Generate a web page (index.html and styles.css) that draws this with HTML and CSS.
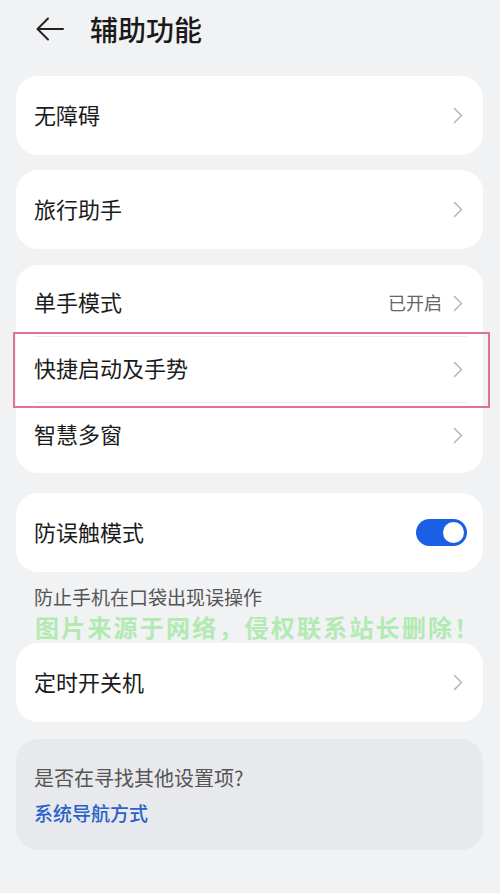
FILE: index.html
```html
<!DOCTYPE html>
<html lang="zh-CN">
<head>
    <meta charset="UTF-8">
    <meta name="viewport" content="width=device-width, initial-scale=1.0">
    <title>辅助功能</title>
    <link rel="stylesheet" href="styles.css">
</head>
<body>
    <!-- Header -->
    <header class="top-bar">
        <svg class="back-icon" width="28" height="24" viewBox="0 0 28 24">
            <path d="M27 12 H2 M12 1.5 L1.5 12 L12 22.5" fill="none" stroke="#222" stroke-width="2" stroke-linecap="round" stroke-linejoin="round"/>
        </svg>
        <h1 class="page-title">辅助功能</h1>
    </header>

    <main class="settings">
        <div class="card card-first">
            <div class="row">
                <span class="label">无障碍</span>
                <svg class="chevron" width="10" height="17" viewBox="0 0 10 17"><path d="M1.5 1.5 L8.5 8.5 L1.5 15.5" fill="none" stroke="#b8b8b8" stroke-width="1.6" stroke-linecap="round" stroke-linejoin="round"/></svg>
            </div>
        </div>

        <div class="card card-gap">
            <div class="row">
                <span class="label">旅行助手</span>
                <svg class="chevron" width="10" height="17" viewBox="0 0 10 17"><path d="M1.5 1.5 L8.5 8.5 L1.5 15.5" fill="none" stroke="#b8b8b8" stroke-width="1.6" stroke-linecap="round" stroke-linejoin="round"/></svg>
            </div>
        </div>

        <!-- Group with three rows -->
        <div class="card card-group card-gap">
            <div class="row row-compact">
                <span class="label">单手模式</span>
                <span class="value">已开启</span>
                <svg class="chevron" width="10" height="17" viewBox="0 0 10 17"><path d="M1.5 1.5 L8.5 8.5 L1.5 15.5" fill="none" stroke="#b8b8b8" stroke-width="1.6" stroke-linecap="round" stroke-linejoin="round"/></svg>
            </div>
            <div class="row row-compact row-divided row-marked">
                <span class="label">快捷启动及手势</span>
                <svg class="chevron" width="10" height="17" viewBox="0 0 10 17"><path d="M1.5 1.5 L8.5 8.5 L1.5 15.5" fill="none" stroke="#b8b8b8" stroke-width="1.6" stroke-linecap="round" stroke-linejoin="round"/></svg>
                <span class="highlight"></span>
            </div>
            <div class="row row-compact row-divided">
                <span class="label">智慧多窗</span>
                <svg class="chevron" width="10" height="17" viewBox="0 0 10 17"><path d="M1.5 1.5 L8.5 8.5 L1.5 15.5" fill="none" stroke="#b8b8b8" stroke-width="1.6" stroke-linecap="round" stroke-linejoin="round"/></svg>
            </div>
        </div>

        <div class="card card-toggle">
            <div class="row">
                <span class="label">防误触模式</span>
                <span class="switch on"><span class="knob"></span></span>
            </div>
        </div>

        <div class="note">
            <p class="note-text">防止手机在口袋出现误操作</p>
            <p class="watermark">图片来源于网络，侵权联系站长删除！</p>
        </div>

        <div class="card">
            <div class="row">
                <span class="label">定时开关机</span>
                <svg class="chevron" width="10" height="17" viewBox="0 0 10 17"><path d="M1.5 1.5 L8.5 8.5 L1.5 15.5" fill="none" stroke="#b8b8b8" stroke-width="1.6" stroke-linecap="round" stroke-linejoin="round"/></svg>
            </div>
        </div>

        <!-- Suggestion box -->
        <div class="suggest">
            <p class="suggest-title">是否在寻找其他设置项?</p>
            <a class="suggest-link" href="#">系统导航方式</a>
        </div>
    </main>
</body>
</html>
```

FILE: styles.css
```css
/* Settings page */
body {
    margin: 0;
    padding: 0;
    background: #f1f2f4;
    font-family: "Noto Sans CJK SC", "Noto Sans", sans-serif;
    color: #1b1b1b;
    width: 500px;
    height: 893px;
    overflow: hidden;
}

.top-bar {
    height: 58px;
    display: flex;
    align-items: center;
    padding-left: 36px;
}

.back-icon {
    display: block;
    margin-right: 26px;
}

.page-title {
    margin: 0;
    font-size: 28px;
    font-weight: 500;
    color: #1a1a1a;
    line-height: 1;
}

.settings {
    display: flex;
    flex-direction: column;
    padding: 0 17px 0 16px;
}

.card {
    background: #ffffff;
    border-radius: 22px;
}

.card-first {
    margin-top: 18px;
}

.card-gap {
    margin-top: 15px;
}

.card-group {
    padding: 5px 0;
    margin-top: 16px;
}

.card-toggle {
    margin-top: 20px;
}

.row {
    position: relative;
    height: 79px;
    display: flex;
    align-items: center;
    padding: 0 20px 0 18px;
}

.row-compact {
    height: 66px;
}

.row-divided::before {
    content: "";
    position: absolute;
    top: 0;
    left: 18px;
    right: 16px;
    border-top: 1px solid #ececec;
}

.label {
    flex: 1;
    font-size: 22px;
    line-height: 1;
    margin-bottom: 4px;
}

.value {
    font-size: 18px;
    color: #666;
    margin-right: 11px;
    margin-bottom: 2px;
}

.chevron {
    display: block;
}

/* pink marker drawn over the second row */
.highlight {
    position: absolute;
    top: -4px;
    bottom: -6px;
    left: -3px;
    right: -7px;
    border: 2.5px solid #e2728f;
}

.switch {
    position: relative;
    width: 51px;
    height: 27px;
    border-radius: 14px;
    background: #cfcfcf;
    margin-right: -4px;
}

.switch.on {
    background: #1a5fe4;
}

.knob {
    position: absolute;
    top: 3px;
    right: 3px;
    width: 21px;
    height: 21px;
    border-radius: 50%;
    background: #fff;
}

.note {
    height: 71px;
    padding-left: 18px;
}

.note-text {
    margin: 14px 0 0;
    font-size: 19px;
    line-height: 22px;
    color: #555;
}

.watermark {
    margin: 6px 0 0 1px;
    font-size: 24px;
    line-height: 26px;
    font-weight: 700;
    letter-spacing: 2.2px;
    color: #b2eab2;
}

.suggest {
    margin-top: 17px;
    background: #e8e9ec;
    border-radius: 22px;
    height: 111px;
    padding: 0 18px;
    box-sizing: border-box;
}

.suggest-title {
    margin: 0;
    padding-top: 27px;
    font-size: 20px;
    line-height: 24px;
    color: #555;
}

.suggest-link {
    display: block;
    margin-top: 12px;
    font-size: 19px;
    line-height: 22px;
    font-weight: 500;
    color: #2a62c9;
    text-decoration: none;
}
```
